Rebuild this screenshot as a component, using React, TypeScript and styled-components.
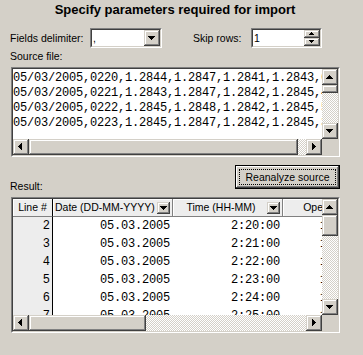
import React from 'react';
import styled, { createGlobalStyle } from 'styled-components';

const GlobalStyle = createGlobalStyle`
  html, body {
    margin: 0;
    padding: 0;
    background: #d4d0c8;
  }
  body {
    font-family: 'Liberation Sans', Arial, sans-serif;
    font-size: 10.5px;
    color: #000;
  }
`;

const RAISED =
  'inset -1px -1px #404040, inset 1px 1px #d4d0c8, inset -2px -2px #808080, inset 2px 2px #fff';

const SPanel = styled.div`
  width: 363px;
  height: 355px;
  box-sizing: border-box;
  padding: 2px 23px 0 10px;
  background: #d4d0c8;
  display: flex;
  flex-direction: column;
  overflow: hidden;
`;

const STitle = styled.div`
  font-size: 13px;
  font-weight: bold;
  line-height: 16px;
  text-align: center;
`;

const SOptionsRow = styled.div`
  margin-top: 10px;
  height: 20px;
  display: flex;
  align-items: center;
`;

const SLabel = styled.div<{ $w?: number; $ml?: number; $mt?: number }>`
  flex: 0 0 ${({ $w }) => ($w ? `${$w}px` : 'auto')};
  margin-left: ${({ $ml }) => $ml || 0}px;
  margin-top: ${({ $mt }) => $mt || 0}px;
  line-height: 13px;
  white-space: nowrap;
`;

const SSunken = styled.div<{ $w: number; $h: number; $ml?: number; $mt?: number }>`
  box-sizing: border-box;
  flex: 0 0 auto;
  width: ${({ $w }) => $w}px;
  height: ${({ $h }) => $h}px;
  margin-left: ${({ $ml }) => $ml || 0}px;
  margin-top: ${({ $mt }) => $mt || 0}px;
  border: 1px solid;
  border-color: #808080 #fff #fff #808080;
  display: flex;
`;

const SSunkenInner = styled.div`
  flex: 1;
  min-width: 0;
  border: 1px solid;
  border-color: #404040 #d4d0c8 #d4d0c8 #404040;
  background: #fff;
  display: flex;
`;

const SFieldText = styled.div`
  flex: 1;
  padding-left: 1px;
  line-height: 16px;
`;

const SSpinColumn = styled.div`
  display: flex;
  flex-direction: column;
`;

const SArrowButton = styled.div<{ $w: number; $h: number }>`
  flex: 0 0 auto;
  width: ${({ $w }) => $w}px;
  height: ${({ $h }) => $h}px;
  background: #d4d0c8;
  box-shadow: ${RAISED};
  & svg {
    display: block;
  }
`;

const SScrollView = styled.div`
  flex: 1;
  min-width: 0;
  display: grid;
  grid-template-columns: minmax(0, 1fr) 16px;
  grid-template-rows: minmax(0, 1fr) 16px;
`;

const SScrollBar = styled.div<{ $vertical?: boolean }>`
  display: flex;
  flex-direction: ${({ $vertical }) => ($vertical ? 'column' : 'row')};
  background: repeating-conic-gradient(#d4d0c8 0 25%, #fff 0 50%) 0 0 / 2px 2px;
`;

const SThumb = styled.div<{ $size: number }>`
  flex: 0 0 ${({ $size }) => $size}px;
  background: #d4d0c8;
  box-shadow: ${RAISED};
`;

const SScrollGap = styled.div<{ $size: number }>`
  flex: 0 0 ${({ $size }) => $size}px;
`;

const SScrollFill = styled.div`
  flex: 1;
`;

const SCorner = styled.div`
  background: #d4d0c8;
`;

const SSourceText = styled.div`
  overflow: hidden;
  padding: 2px 0 0 0;
  font-family: 'Liberation Mono', 'Courier New', monospace;
  font-size: 12px;
  letter-spacing: -0.2px;
  line-height: 15px;
  white-space: pre;
`;

const SButtonRow = styled.div`
  margin-top: 8px;
  display: flex;
  justify-content: space-between;
  align-items: flex-start;
`;

const SDefaultButton = styled.button`
  box-sizing: border-box;
  width: 105px;
  height: 24px;
  padding: 3px;
  border: 1px solid #000;
  background: #d4d0c8;
  box-shadow: inset -1px -1px #404040, inset 1px 1px #fff, inset -2px -2px #808080;
  font-family: 'Liberation Sans', Arial, sans-serif;
  font-size: 10.5px;
  color: #000;
  display: flex;
`;

const SFocusRect = styled.span`
  flex: 1;
  border: 1px dotted #000;
  display: flex;
  align-items: center;
  justify-content: center;
  line-height: 13px;
`;

const STable = styled.div`
  overflow: hidden;
  background: #fff;
`;

const SRow = styled.div`
  display: flex;
  height: 18px;
`;

const SHeadCell = styled.div<{ $w: number; $dark?: boolean }>`
  box-sizing: border-box;
  flex: 0 0 ${({ $w }) => $w}px;
  display: flex;
  align-items: center;
  padding: 0 2px;
  background: #ededed;
  border-right: 1px solid ${({ $dark }) => ($dark ? '#000' : '#808080')};
  border-bottom: 1px solid #808080;
  box-shadow: inset 1px 1px #fff;
  white-space: nowrap;
`;

const SHeadLabel = styled.div<{ $align: 'left' | 'center' }>`
  flex: 1;
  min-width: 0;
  text-align: ${({ $align }) => $align};
  line-height: 13px;
`;

const SLineCell = styled.div`
  box-sizing: border-box;
  flex: 0 0 40px;
  padding-right: 2px;
  background: #ededed;
  border-right: 1px solid #000;
  text-align: right;
  font-family: 'Liberation Mono', 'Courier New', monospace;
  font-size: 12px;
  line-height: 18px;
`;

const SDataCell = styled.div<{ $w: number; $pad: number }>`
  box-sizing: border-box;
  flex: 0 0 ${({ $w }) => $w}px;
  padding-right: ${({ $pad }) => $pad}px;
  text-align: right;
  font-family: 'Liberation Mono', 'Courier New', monospace;
  font-size: 12px;
  letter-spacing: -0.2px;
  line-height: 18px;
  white-space: nowrap;
`;

const ARROWS = {
  up: 'M7 6h1v1h1v1h1v1h1v1H4V9h1V8h1V7h1z',
  down: 'M4 6h7v1h-1v1h-1v1h-1v1H7V9H6V8H5V7H4z',
  left: 'M5 7h1V6h1V5h1V4h1v7H8v-1H7V9H6V8H5z',
  right: 'M6 4h1v1h1v1h1v1h1v1H9v1H8v1H7v1H6z',
  spinUp: 'M7 2h1v1h1v1h1v1H5V4h1V3h1z',
  spinDown: 'M5 2h5v1H9v1H8v1H7V4H6V3H5z',
  headDown: 'M3 4h7v1H9v1H8v1H7v1H6V7H5V6H4V5H3z',
};

const ArrowButton = ({
  shape,
  w = 16,
  h = 16,
}: {
  readonly shape: keyof typeof ARROWS;
  readonly w?: number;
  readonly h?: number;
}) => (
  <SArrowButton $w={w} $h={h}>
    <svg width={w} height={h} viewBox={`0 0 ${w} ${h}`} shapeRendering="crispEdges">
      <path d={ARROWS[shape]} fill="#000" />
    </svg>
  </SArrowButton>
);

const ScrollBar = ({
  vertical,
  start = 0,
  size,
}: {
  readonly vertical?: boolean;
  readonly start?: number;
  readonly size: number;
}) => (
  <SScrollBar $vertical={vertical}>
    <ArrowButton shape={vertical ? 'up' : 'left'} />
    <SScrollGap $size={start} />
    <SThumb $size={size} />
    <SScrollFill />
    <ArrowButton shape={vertical ? 'down' : 'right'} />
  </SScrollBar>
);

const sourceLines = [
  '05/03/2005,0220,1.2844,1.2847,1.2841,1.2843,62',
  '05/03/2005,0221,1.2843,1.2847,1.2842,1.2845,48',
  '05/03/2005,0222,1.2845,1.2848,1.2842,1.2845,51',
  '05/03/2005,0223,1.2845,1.2847,1.2842,1.2845,39',
];

const columns: {
  key: 'date' | 'time' | 'open';
  title: string;
  width: number;
  pad: number;
  align: 'left' | 'center';
}[] = [
  { key: 'date', title: 'Date (DD-MM-YYYY)', width: 120, pad: 3, align: 'left' },
  { key: 'time', title: 'Time (HH-MM)', width: 110, pad: 3, align: 'center' },
  { key: 'open', title: 'Open', width: 80, pad: 1, align: 'center' },
];

const rows = [
  { line: 2, date: '05.03.2005', time: '2:20:00', open: '1.2844' },
  { line: 3, date: '05.03.2005', time: '2:21:00', open: '1.2843' },
  { line: 4, date: '05.03.2005', time: '2:22:00', open: '1.2845' },
  { line: 5, date: '05.03.2005', time: '2:23:00', open: '1.2845' },
  { line: 6, date: '05.03.2005', time: '2:24:00', open: '1.2846' },
  { line: 7, date: '05.03.2005', time: '2:25:00', open: '1.2847' },
];

export default function App(): JSX.Element {
  return (
    <>
      <GlobalStyle />
      <SPanel>
        <STitle>Specify parameters required for import</STitle>

        <SOptionsRow>
          <SLabel $w={80}>Fields delimiter:</SLabel>
          <SSunken $w={72} $h={20}>
            <SSunkenInner>
              <SFieldText>,</SFieldText>
              <ArrowButton shape="down" />
            </SSunkenInner>
          </SSunken>
          <SLabel $w={58} $ml={31}>Skip rows:</SLabel>
          <SSunken $w={71} $h={20}>
            <SSunkenInner>
              <SFieldText>1</SFieldText>
              <SSpinColumn>
                <ArrowButton shape="spinUp" h={8} />
                <ArrowButton shape="spinDown" h={8} />
              </SSpinColumn>
            </SSunkenInner>
          </SSunken>
        </SOptionsRow>

        <SLabel $mt={2}>Source file:</SLabel>
        <SSunken $w={329} $h={90} $ml={1} $mt={4}>
          <SSunkenInner>
            <SScrollView>
              <SSourceText>
                {sourceLines.map((l) => (
                  <div key={l}>{l}</div>
                ))}
              </SSourceText>
              <ScrollBar vertical size={8} />
              <ScrollBar size={269} />
              <SCorner />
            </SScrollView>
          </SSunkenInner>
        </SSunken>

        <SButtonRow>
          <SLabel $mt={15}>Result:</SLabel>
          <SDefaultButton>
            <SFocusRect>Reanalyze source</SFocusRect>
          </SDefaultButton>
        </SButtonRow>

        <SSunken $w={329} $h={136} $ml={1} $mt={4}>
          <SSunkenInner>
            <SScrollView>
              <STable>
                <SRow>
                  <SHeadCell $w={40} $dark>
                    <SHeadLabel $align="center">Line #</SHeadLabel>
                  </SHeadCell>
                  {columns.map((c) => (
                    <SHeadCell key={c.key} $w={c.width}>
                      <SHeadLabel $align={c.align}>{c.title}</SHeadLabel>
                      <ArrowButton shape="headDown" w={13} h={12} />
                    </SHeadCell>
                  ))}
                </SRow>
                {rows.map((r) => (
                  <SRow key={r.line}>
                    <SLineCell>{r.line}</SLineCell>
                    {columns.map((c) => (
                      <SDataCell key={c.key} $w={c.width} $pad={c.pad}>
                        {r[c.key]}
                      </SDataCell>
                    ))}
                  </SRow>
                ))}
              </STable>
              <ScrollBar vertical size={21} />
              <ScrollBar size={117} />
              <SCorner />
            </SScrollView>
          </SSunkenInner>
        </SSunken>
      </SPanel>
    </>
  );
}
